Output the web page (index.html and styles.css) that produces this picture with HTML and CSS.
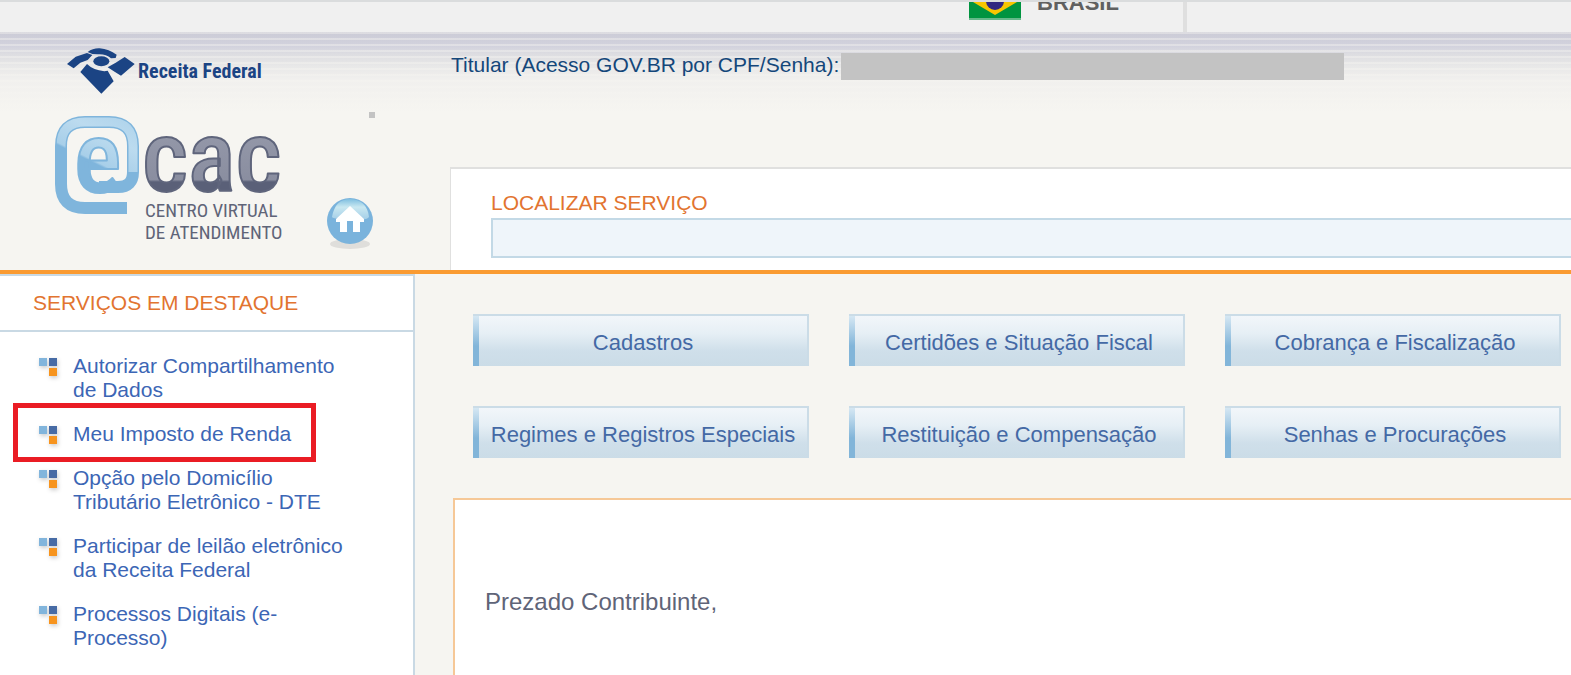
FILE: index.html
```html
<!DOCTYPE html>
<html lang="pt-br">

<head>
    <meta charset="utf-8">
    <title>e-CAC - Centro Virtual de Atendimento</title>
    <link rel="stylesheet" href="styles.css">
</head>

<body>
    <!-- Barra do governo -->
    <div class="barra">
        <a class="barra-brasil" href="#">
            <svg class="bandeira" width="52" height="36" viewBox="0 0 52 36">
                <rect width="52" height="36" fill="#009440" />
                <path d="M26 4L48 18 26 31 4 18z" fill="#f7c600" />
                <circle cx="26" cy="17" r="9" fill="#302681" />
                <path d="M0 35h52" stroke="#66b98a" stroke-width="2" />
            </svg>
            <span>BRASIL</span>
        </a>
        <div class="barra-links"></div>
    </div>

    <header class="topo">
        <div class="marca">
            <a class="receita" href="#">
                <svg width="68" height="46" viewBox="22 18 204 138" fill="#1b4484">
                    <path d="M22 66L48 44 82 33 98 39 84 54 62 62 42 79z" />
                    <path d="M84 30Q100 18 120 19 148 22 171 38L168 48 154 49Q138 35 114 37L98 36z" />
                    <ellipse cx="125" cy="58" rx="24" ry="15" />
                    <path d="M144 76L168 62 195 45 225 66 184 101 166 90z" />
                    <path d="M62 90L82 66Q100 84 134 88L144 86 162 118 125 155z" />
                </svg>
                <span>Receita Federal</span>
            </a>
            <div class="marca-linha">
                <svg class="ecac" width="234" height="126" viewBox="0 0 234 126" role="img" aria-label="e-CAC">
                    <defs>
                        <linearGradient id="azul" gradientUnits="userSpaceOnUse" x1="60" y1="-20" x2="10" y2="80">
                            <stop offset="0" stop-color="#a9d0ea" />
                            <stop offset=".35" stop-color="#bcdbef" />
                            <stop offset=".6" stop-color="#a8cfe9" />
                            <stop offset=".62" stop-color="#7fb5dc" />
                        </linearGradient>
                        <linearGradient id="cinza" gradientUnits="userSpaceOnUse" x1="0" y1="20" x2="0" y2="76">
                            <stop offset="0" stop-color="#9397a8" />
                            <stop offset=".78" stop-color="#8a8ea0" />
                            <stop offset=".82" stop-color="#5a6078" />
                        </linearGradient>
                    </defs>
                    <text class="letra-e" x="19" y="76">e</text>
                    <path class="arroba-contorno" d="M72 92H30Q6 92 6 68V30Q6 6 30 6H54Q78 6 78 30V56Q78 71 63 71H44" />
                    <path class="arroba" d="M72 92H30Q6 92 6 68V30Q6 6 30 6H54Q78 6 78 30V56" />
                    <text class="letras-cac" x="87" y="75">cac</text>
                    <text class="legenda" x="90" y="101">CENTRO VIRTUAL</text>
                    <text class="legenda" x="90" y="123">DE ATENDIMENTO</text>
                </svg>
                <a class="inicio" href="#" aria-label="Página inicial">
                    <svg width="48" height="54" viewBox="0 0 48 54">
                        <defs>
                            <linearGradient id="brilho" x1="0" y1="0" x2="0" y2="1">
                                <stop offset="0" stop-color="#7fbfe0" />
                                <stop offset=".4" stop-color="#c9e8f1" />
                                <stop offset="1" stop-color="#a5cfe8" />
                            </linearGradient>
                        </defs>
                        <ellipse cx="24" cy="47" rx="20" ry="5" fill="#dfdedb" />
                        <circle cx="24" cy="24" r="23" fill="#7ab3dc" />
                        <path d="M6 20C8 8 14 2 24 2s18 6 19 18C38 26 30 18 24 18S10 24 6 20z" fill="url(#brilho)" />
                        <path d="M24 9L38 22V25H34V35H27V24H21V35H14V25H10V22z" fill="#fff" />
                    </svg>
                </a>
            </div>
            <span class="ponto"></span>
        </div>
        <div class="acesso">
            <p class="titular">Titular (Acesso GOV.BR por CPF/Senha): <span class="tarja"></span></p>
            <form class="busca">
                <label for="servico">LOCALIZAR SERVIÇO</label>
                <input type="text" id="servico">
            </form>
        </div>
    </header>

    <div class="pagina">
        <nav class="lateral">
            <h2>SERVIÇOS EM DESTAQUE</h2>
            <ul>
                <li><a href="#">Autorizar Compartilhamento de Dados</a></li>
                <li class="destaque"><a href="#">Meu Imposto de Renda</a></li>
                <li><a href="#">Opção pelo Domicílio Tributário Eletrônico - DTE</a></li>
                <li><a href="#">Participar de leilão eletrônico da Receita Federal</a></li>
                <li><a href="#">Processos Digitais (e-Processo)</a></li>
            </ul>
        </nav>

        <main class="conteudo">
            <div class="botoes">
                <button type="button">Cadastros</button>
                <button type="button">Certidões e Situação Fiscal</button>
                <button type="button">Cobrança e Fiscalização</button>
                <button type="button">Regimes e Registros Especiais</button>
                <button type="button">Restituição e Compensação</button>
                <button type="button">Senhas e Procurações</button>
            </div>
            <section class="mensagem">
                <p>Prezado Contribuinte,</p>
            </section>
        </main>
    </div>
</body>

</html>
```
FILE: styles.css
```css
*,
*::before,
*::after {
    box-sizing: border-box;
}

body {
    margin: 0;
    min-height: 100vh;
    display: flex;
    flex-direction: column;
    font-family: "Liberation Sans", Arial, sans-serif;
    font-size: 21px;
    line-height: 24px;
    background-color: #f6f5f1;
}

a {
    text-decoration: none;
}

/* Barra do governo */
.barra {
    display: flex;
    height: 32px;
    overflow: hidden;
    background-color: #f0f0f0;
    border-top: 2px solid #dadcdd;
}

.barra-brasil {
    flex: 0 0 1187px;
    display: flex;
    align-items: flex-end;
    gap: 16px;
    height: 18px;
    padding-left: 969px;
    color: #606060;
    font-weight: bold;
    font-size: 22px;
}

.barra-brasil span {
    margin-bottom: 5px;
}

.barra-links {
    flex: 1;
    margin-left: -4px;
    border-left: 4px solid #dfdfdf;
}

/* Topo */
.topo {
    display: grid;
    grid-template-columns: 450px 1fr;
    height: 242px;
    border-bottom: 4px solid #fa9b32;
    background:
        repeating-linear-gradient(rgba(246, 245, 241, 0.4) 0 2px, rgba(246, 245, 241, 0) 2px 6px),
        linear-gradient(#cbcbd6, #d2d2dd 14px, #dddde1 22px, #e8e8e8 34px, #f1f0ee 48px, #f6f5f1 80px);
}

.marca {
    position: relative;
    padding: 16px 0 0 55px;
}

.receita {
    display: flex;
    align-items: center;
    gap: 3px;
    padding-left: 12px;
    color: #1b4484;
    font-family: "Liberation Sans Narrow", "Roboto Condensed", sans-serif;
    font-weight: bold;
    font-size: 20px;
}

.marca-linha {
    display: flex;
    align-items: flex-end;
    gap: 37px;
    margin-top: 22px;
}

.marca-linha svg {
    display: block;
}

.inicio {
    margin-bottom: -9px;
}

.arroba-contorno {
    fill: none;
    stroke: #7fb5dc;
    stroke-width: 12;
}

.arroba {
    fill: none;
    stroke: url(#azul);
    stroke-width: 9;
}

.letra-e,
.letras-cac {
    font-family: "Liberation Sans Narrow", "Roboto Condensed", sans-serif;
    font-weight: 500;
    font-size: 100px;
    fill: url(#azul);
    stroke: #7fb5dc;
    stroke-width: 2;
    stroke-linejoin: round;
}

.letras-cac {
    fill: url(#cinza);
    stroke: #5f657c;
}

.legenda {
    font-family: "Liberation Sans Narrow", "Roboto Condensed", sans-serif;
    font-size: 19px;
    fill: #5f6478;
}

.ponto {
    position: absolute;
    left: 369px;
    top: 80px;
    width: 6px;
    height: 6px;
    background-color: #c3c3c3;
}

.acesso {
    display: flex;
    flex-direction: column;
    justify-content: space-between;
}

.titular {
    display: flex;
    align-items: flex-start;
    gap: 2px;
    margin: 0;
    padding: 21px 0 0 1px;
    color: #14477a;
}

.tarja {
    width: 503px;
    height: 27px;
    background-color: #c3c3c3;
}

.busca {
    display: flex;
    flex-direction: column;
    gap: 3px;
    padding: 22px 0 12px 40px;
    background-color: #fff;
    border-top: 2px solid #e0e0df;
    border-left: 1px solid #e0e0df;
}

.busca label,
.lateral h2 {
    color: #e27430;
}

.busca input {
    height: 40px;
    border: 2px solid #c3d9e6;
    border-right: none;
    background-color: #eff5fa;
    font: inherit;
    padding: 0 8px;
}

/* Coluna da esquerda */
.pagina {
    flex: 1;
    display: flex;
}

.lateral {
    flex: 0 0 415px;
    background-color: #fff;
    border-top: 2px solid #c9d9e4;
    border-right: 2px solid #c9d9e4;
}

.lateral h2 {
    margin: 0;
    padding: 15px 33px;
    font-size: 21px;
    font-weight: normal;
    border-bottom: 2px solid #c9d9e4;
}

.lateral ul {
    list-style: none;
    margin: 0;
    padding: 22px 50px 24px 39px;
    display: flex;
    flex-direction: column;
    gap: 20px;
}

.lateral li {
    position: relative;
    padding-left: 34px;
}

.lateral a {
    color: #3c66b5;
}

/* quadradinhos do marcador */
.lateral li::before {
    content: "";
    position: absolute;
    left: 0;
    top: 4px;
    width: 18px;
    height: 18px;
    background:
        linear-gradient(#82b5dc, #82b5dc) 0 0 / 8px 8px no-repeat,
        linear-gradient(#476ba5, #476ba5) 10px 0 / 8px 8px no-repeat,
        linear-gradient(#f7941e, #f7941e) 10px 10px / 8px 8px no-repeat;
    filter: drop-shadow(1px 2px 2px rgba(0, 0, 0, 0.2));
}

.destaque::after {
    content: "";
    position: absolute;
    left: -26px;
    top: -19px;
    width: 303px;
    height: 59px;
    border: 5px solid #ea1c24;
    pointer-events: none;
}

/* Conteúdo */
.conteudo {
    flex: 1;
    display: flex;
    flex-direction: column;
    padding-left: 38px;
}

.botoes {
    display: grid;
    grid-template-columns: repeat(3, 1fr);
    gap: 40px;
    padding: 40px 10px 40px 20px;
}

.botoes button {
    height: 52px;
    padding: 4px 0 0 6px;
    border: 2px solid #cbdce7;
    border-left: none;
    border-bottom: none;
    background:
        linear-gradient(#d5e7f3, #82b5d9 60%) 0 0 / 6px 100% no-repeat,
        linear-gradient(#f2f6fa, #e6eff5 35%, #cfdfea 70%, #cbdce7);
    color: #4469a5;
    font-family: inherit;
    font-size: 22px;
    cursor: pointer;
}

.mensagem {
    flex: 1;
    padding: 90px 30px 24px;
    background-color: #fff;
    border-top: 2px solid #f6c897;
    border-left: 2px solid #f6c897;
    color: #5f6478;
    font-size: 24px;
}

.mensagem p {
    margin: 0;
}
```
